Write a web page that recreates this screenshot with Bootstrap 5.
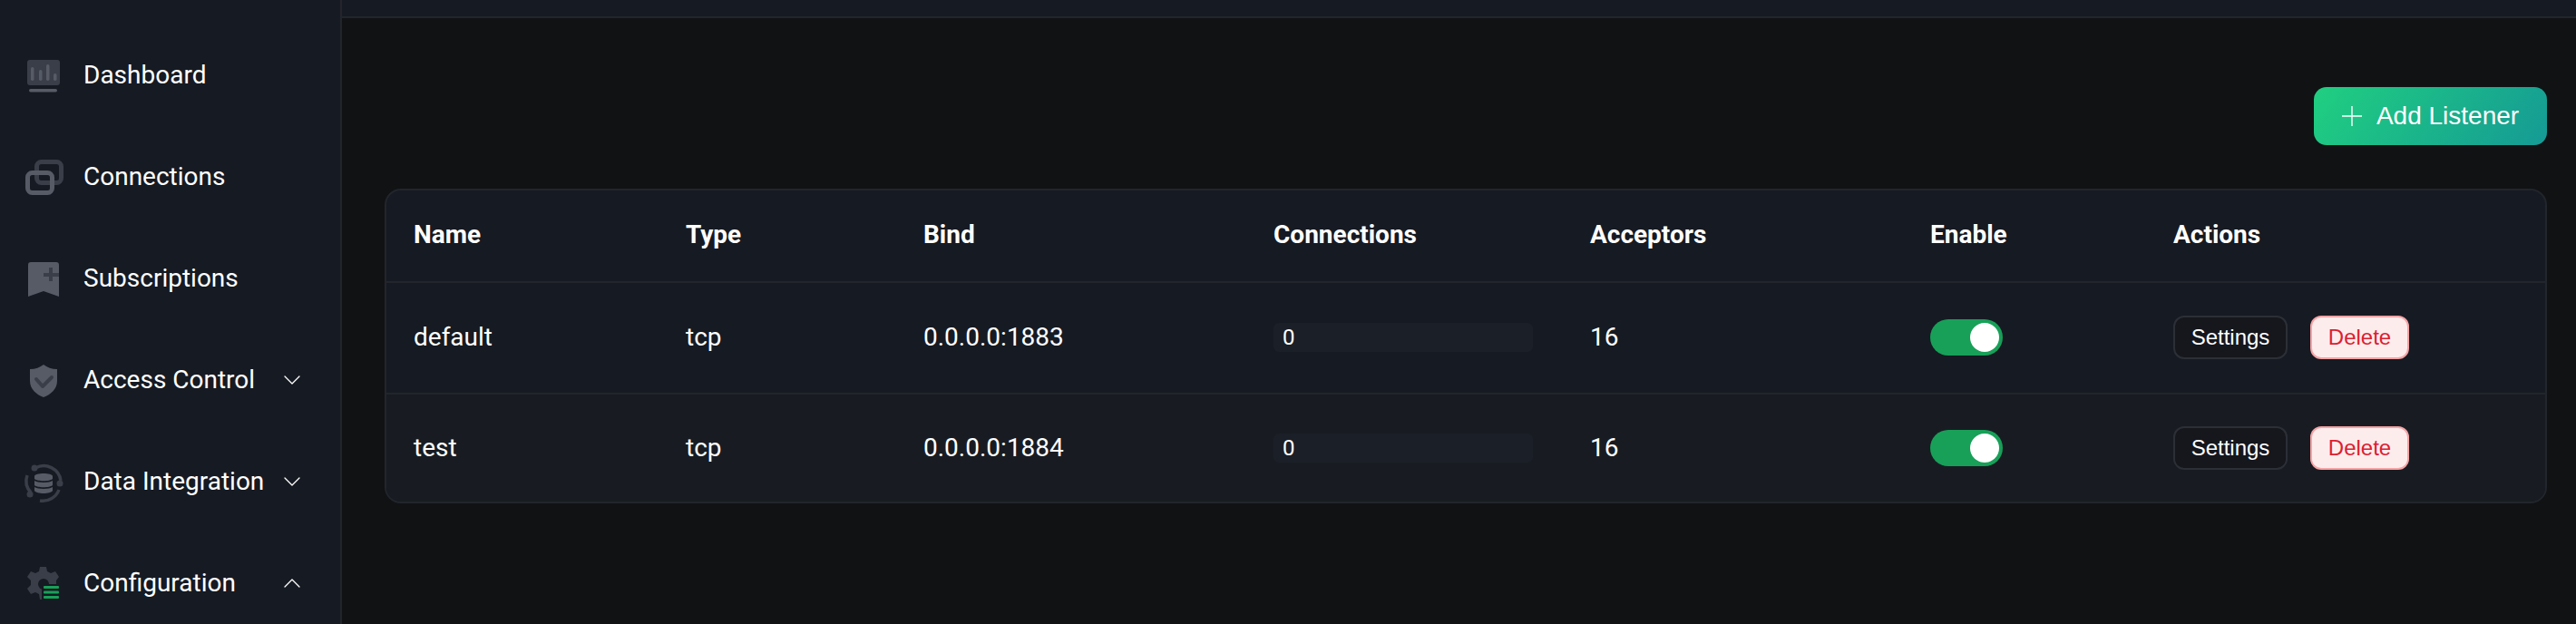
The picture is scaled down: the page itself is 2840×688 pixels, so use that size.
<!DOCTYPE html>
<html lang="en">
<head>
    <meta charset="UTF-8">
    <meta name="viewport" content="width=device-width, initial-scale=1.0">
    <title>Listeners</title>
    <link href="https://cdn.jsdelivr.net/npm/bootstrap@5.3.0/dist/css/bootstrap.min.css" rel="stylesheet">
    <style>
        html, body {
            height: 100%;
            overflow: hidden;
        }

        body {
            background-color: #111214;
            color: #fff;
            font-family: Roboto, "Liberation Sans", sans-serif;
            font-size: 28px;
        }

        .side-panel {
            width: 377px;
            height: 688px;
            flex: none;
            background-color: #161a22;
            border-right: 2px solid #22252c;
            padding-top: 27px;
            overflow: hidden;
        }

        .side-item {
            height: 112px;
            flex: none;
            padding-left: 24px;
            padding-right: 44px;
            color: #fff;
            text-decoration: none;
        }

        .side-item:hover {
            color: #fff;
        }

        .side-icon {
            width: 48px;
            height: 48px;
            flex: none;
            margin-right: 20px;
        }

        .side-arrow {
            width: 18px;
            height: 10px;
            flex: none;
        }

        .top-strip {
            height: 20px;
            background-color: #161a22;
            border-bottom: 2px solid #22252c;
        }

        .main-body {
            padding: 76px 32px 0 47px;
        }

        .add-btn {
            width: 257px;
            height: 64px;
            border: 0;
            border-radius: 14px;
            background: linear-gradient(125deg, #20cf80 0%, #159a95 100%);
            color: #fff;
            font-family: "Liberation Sans", sans-serif;
            font-size: 28px;
            padding: 0;
        }

        .add-btn:hover {
            color: #fff;
            background: linear-gradient(125deg, #20cf80 0%, #159a95 100%);
        }

        .table-shell {
            margin-top: 48px;
            border: 2px solid #22252c;
            border-radius: 18px;
            overflow: hidden;
            background-color: #161a22;
        }

        .listener-table {
            --bs-table-bg: transparent;
            --bs-table-color: #fff;
            --bs-table-border-color: #22252c;
            table-layout: fixed;
            margin: 0;
            font-size: 28px;
        }

        .listener-table th,
        .listener-table td {
            padding: 0 0 0 30px;
            vertical-align: middle;
            border-bottom: 2px solid #22252c;
        }

        .listener-table tbody tr:last-child td {
            border-bottom: 0;
        }

        .listener-table th {
            height: 101px;
            font-weight: 700;
            padding-bottom: 2px;
        }

        .row-one td {
            height: 123px;
            padding-bottom: 2px;
        }

        .row-two td {
            height: 119px;
            background-color: #181c22;
        }

        .col-name { width: 300px; }
        .col-type { width: 262px; }
        .col-bind { width: 386px; }
        .col-conn { width: 349px; }
        .col-acceptors { width: 375px; }
        .col-enable { width: 268px; }

        .conn-bar {
            --bs-progress-bg: #1b1f27;
            width: 286px;
            height: 32px;
            border-radius: 6px;
            font-size: 24px;
            padding-left: 10px;
            align-items: center;
            color: #fff;
        }

        .row-toggle {
            position: relative;
            display: block;
            width: 80px;
            height: 40px;
            border-radius: 20px;
            background-color: #18a058;
        }

        .row-toggle::after {
            content: "";
            position: absolute;
            top: 4px;
            right: 4px;
            width: 32px;
            height: 32px;
            border-radius: 50%;
            background-color: #fff;
        }

        .btn-settings,
        .btn-remove {
            height: 48px;
            border-radius: 12px;
            border-width: 2px;
            font-family: "Liberation Sans", sans-serif;
            font-size: 24px;
            line-height: 1;
            padding: 0;
        }

        .btn-settings {
            width: 126px;
            background-color: #15171d;
            border-color: #2c2f36;
            color: #fff;
        }

        .btn-remove {
            width: 109px;
            background-color: #fdecec;
            border-color: #f5a3a5;
            color: #dc2030;
        }

        .action-gap {
            gap: 25px;
        }

        .ic-dim { fill: #3a3e48; }
        .ic-mid { fill: #565b66; }
        .ic-green { fill: #18a058; }
        .ic-line-dim { fill: none; stroke: #3a3e48; }
        .ic-line-mid { fill: none; stroke: #565b66; }
        .ic-arrow { fill: none; stroke: #fff; stroke-width: 1.3; stroke-linecap: round; stroke-linejoin: round; }
    </style>
</head>
<body class="d-flex">
    <aside class="side-panel d-flex flex-column">
        <a class="side-item d-flex align-items-center" href="#">
            <svg class="side-icon" viewBox="0 0 48 48">
                <rect class="ic-dim" x="6" y="7" width="36" height="28" rx="3"/>
                <rect class="ic-mid" x="10" y="15" width="3.5" height="15" rx="1.7"/>
                <rect class="ic-mid" x="19" y="18" width="3.5" height="12" rx="1.7"/>
                <rect class="ic-mid" x="27" y="12" width="3.5" height="18" rx="1.7"/>
                <rect class="ic-mid" x="35" y="22" width="3.5" height="8" rx="1.7"/>
                <rect class="ic-mid" x="8" y="39" width="31" height="3.5" rx="1.7"/>
            </svg>
            <span>Dashboard</span>
        </a>
        <a class="side-item d-flex align-items-center" href="#">
            <svg class="side-icon" viewBox="0 0 48 48">
                <rect class="ic-line-dim" stroke-width="5" x="16.5" y="7.5" width="27" height="23" rx="5"/>
                <rect class="ic-line-mid" stroke-width="5" x="6.5" y="19.5" width="27" height="22" rx="5"/>
            </svg>
            <span>Connections</span>
        </a>
        <a class="side-item d-flex align-items-center" href="#">
            <svg class="side-icon" viewBox="0 0 48 48">
                <path class="ic-mid" d="M10 6h28a3 3 0 0 1 3 3v35l-17-6-17 6V9a3 3 0 0 1 3-3z"/>
                <path class="ic-line-dim" stroke-width="4" d="M32 12v15M24 20h17"/>
            </svg>
            <span>Subscriptions</span>
        </a>
        <a class="side-item d-flex align-items-center" href="#">
            <svg class="side-icon" viewBox="0 0 48 48">
                <path class="ic-mid" d="M24 7c4 3 9 5 15 5v13c0 9-7 15-15 18-8-3-15-9-15-18V12c6 0 11-2 15-5z"/>
                <path class="ic-line-dim" stroke-width="4" stroke-linecap="round" stroke-linejoin="round" d="M16 23l7 8 10-10"/>
            </svg>
            <span>Access Control</span>
            <svg class="side-arrow ms-auto" viewBox="0 0 18 10"><path class="ic-arrow" d="M1 1l8 8 8-8"/></svg>
        </a>
        <a class="side-item d-flex align-items-center" href="#">
            <svg class="side-icon" viewBox="0 0 48 48">
                <path class="ic-line-dim" stroke-width="3.5" d="M15 9a19 19 0 0 1 28 14M41 33a19 19 0 0 1-21 12M10 36A19 19 0 0 1 6 17"/>
                <circle class="ic-dim" cx="14" cy="9" r="3.5"/>
                <circle class="ic-dim" cx="42" cy="26" r="3.5"/>
                <circle class="ic-dim" cx="9" cy="38" r="3.5"/>
                <path class="ic-mid" d="M14 18c0-4 20-4 20 0v3c-3 3-17 3-20 0zM14 23c3 2.5 17 2.5 20 0v5c-3 3-17 3-20 0zM14 30c3 2.5 17 2.5 20 0v4c-2 4-18 4-20 0z"/>
            </svg>
            <span>Data Integration</span>
            <svg class="side-arrow ms-auto" viewBox="0 0 18 10"><path class="ic-arrow" d="M1 1l8 8 8-8"/></svg>
        </a>
        <a class="side-item d-flex align-items-center" href="#">
            <svg class="side-icon" viewBox="0 0 48 48">
                <path class="ic-dim" d="M20 6h7l1 5 4 2 5-2 4 6-3 4v5l3 4-4 6-5-2-4 2-1 6h-7l-1-6-4-2-5 2-4-6 4-4v-5l-4-4 4-6 5 2 4-2z"/>
                <circle fill="#161a22" cx="24" cy="25" r="6"/>
                <rect fill="#161a22" x="22" y="25" width="21" height="18"/>
                <rect class="ic-green" x="24" y="27" width="17" height="3" rx="1"/>
                <rect class="ic-green" x="24" y="32.5" width="17" height="3" rx="1"/>
                <rect class="ic-green" x="24" y="38" width="17" height="3" rx="1"/>
            </svg>
            <span>Configuration</span>
            <svg class="side-arrow ms-auto" viewBox="0 0 18 10"><path class="ic-arrow" d="M1 9l8-8 8 8"/></svg>
        </a>
    </aside>

    <div class="flex-grow-1">
        <div class="top-strip"></div>
        <main class="main-body">
            <div class="d-flex justify-content-end">
                <button class="btn add-btn d-flex align-items-center justify-content-center gap-3" type="button">
                    <svg width="22" height="22" viewBox="0 0 22 22"><path d="M11 0v22M0 11h22" stroke="#fff" stroke-width="1.4" fill="none"/></svg>
                    <span>Add Listener</span>
                </button>
            </div>
            <div class="table-shell">
                <table class="table listener-table">
                    <colgroup>
                        <col class="col-name">
                        <col class="col-type">
                        <col class="col-bind">
                        <col class="col-conn">
                        <col class="col-acceptors">
                        <col class="col-enable">
                        <col>
                    </colgroup>
                    <thead>
                        <tr>
                            <th>Name</th>
                            <th>Type</th>
                            <th>Bind</th>
                            <th>Connections</th>
                            <th>Acceptors</th>
                            <th>Enable</th>
                            <th>Actions</th>
                        </tr>
                    </thead>
                    <tbody>
                        <tr class="row-one">
                            <td>default</td>
                            <td>tcp</td>
                            <td>0.0.0.0:1883</td>
                            <td><div class="progress conn-bar">0</div></td>
                            <td>16</td>
                            <td><span class="row-toggle"></span></td>
                            <td>
                                <div class="d-flex action-gap">
                                    <button class="btn btn-settings" type="button">Settings</button>
                                    <button class="btn btn-remove" type="button">Delete</button>
                                </div>
                            </td>
                        </tr>
                        <tr class="row-two">
                            <td>test</td>
                            <td>tcp</td>
                            <td>0.0.0.0:1884</td>
                            <td><div class="progress conn-bar">0</div></td>
                            <td>16</td>
                            <td><span class="row-toggle"></span></td>
                            <td>
                                <div class="d-flex action-gap">
                                    <button class="btn btn-settings" type="button">Settings</button>
                                    <button class="btn btn-remove" type="button">Delete</button>
                                </div>
                            </td>
                        </tr>
                    </tbody>
                </table>
            </div>
        </main>
    </div>

    <script src="https://cdn.jsdelivr.net/npm/bootstrap@5.3.0/dist/js/bootstrap.bundle.min.js"></script>
</body>
</html>
